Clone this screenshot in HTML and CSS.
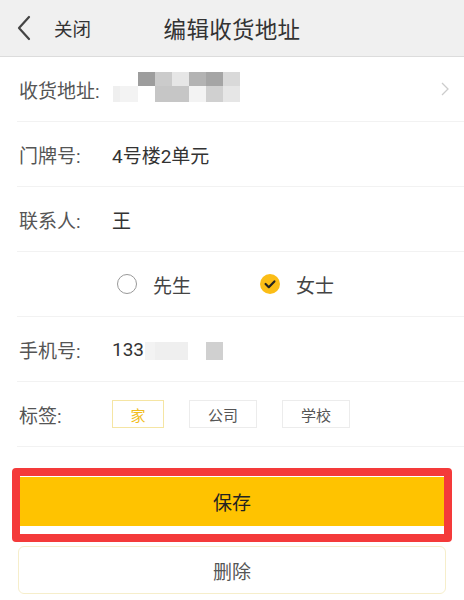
FILE: index.html
```html
<!DOCTYPE html>
<html lang="zh-CN">
<head>
    <meta charset="UTF-8">
    <meta name="viewport" content="width=device-width, initial-scale=1.0">
    <title>编辑收货地址</title>
    <link rel="stylesheet" href="styles.css">
</head>
<body>
    <div class="topbar">
        <div class="topbar-left">
            <svg class="back" width="16" height="26" viewBox="0 0 16 26">
                <polyline points="13,2 3,13 13,24" fill="none" stroke="#444" stroke-width="2.2" stroke-linecap="round" stroke-linejoin="round"/>
            </svg>
            <span class="close">关闭</span>
        </div>
        <div class="title">编辑收货地址</div>
        <div></div>
    </div>

    <div class="form">
        <div class="row">
            <span class="label">收货地址:</span>
            <!-- address hidden behind a mosaic -->
            <div class="mosaic addr">
                <span></span><span></span><span class="s2"></span><span class="s5"></span><span class="s7"></span><span class="s4"></span><span class="s3"></span><span class="s6"></span>
                <span class="s8"></span><span class="s9"></span><span></span><span class="s5b"></span><span class="s5b"></span><span class="s9"></span><span class="s5c"></span><span class="s7"></span>
            </div>
            <svg class="more" width="10" height="14" viewBox="0 0 10 14">
                <polyline points="2,1 8,7 2,13" fill="none" stroke="#ccc" stroke-width="1.3"/>
            </svg>
        </div>

        <div class="row">
            <span class="label">门牌号:</span>
            <span class="value">4号楼2单元</span>
        </div>

        <div class="row">
            <span class="label">联系人:</span>
            <span class="value">王</span>
        </div>

        <div class="row gender">
            <label class="option">
                <span class="radio"></span>
                <span>先生</span>
            </label>
            <label class="option">
                <span class="radio checked">
                    <svg width="20" height="20" viewBox="0 0 20 20">
                        <polyline points="5.6,10 8.8,13.2 14.4,7.4" fill="none" stroke="#222" stroke-width="2.2" stroke-linecap="round" stroke-linejoin="round"/>
                    </svg>
                </span>
                <span>女士</span>
            </label>
        </div>

        <div class="row">
            <span class="label">手机号:</span>
            <span class="value">133</span>
            <div class="mosaic phone">
                <span class="s9"></span><span class="s8"></span><span class="s8"></span><span></span><span class="s5c"></span>
            </div>
        </div>

        <div class="row">
            <span class="label">标签:</span>
            <div class="tags">
                <span class="tag active">家</span>
                <span class="tag">公司</span>
                <span class="tag">学校</span>
            </div>
        </div>
    </div>

    <div class="actions">
        <div class="highlight">
            <button class="btn-save">保存</button>
        </div>
        <button class="btn-delete">删除</button>
    </div>
</body>
</html>
```

FILE: styles.css
```css
body {
    margin: 0;
    font-family: Roboto, "Noto Sans CJK SC", sans-serif;
    background: #fff;
    color: #333;
}

/* Top bar */
.topbar {
    display: grid;
    grid-template-columns: 1fr auto 1fr;
    align-items: center;
    height: 56px;
    background: #f0f0f0;
    border-bottom: 1px solid #dcdcdc;
}
.topbar-left {
    display: flex;
    align-items: center;
    padding-left: 16px;
}
.back {
    display: block;
}
.close {
    margin-left: 22px;
    font-size: 18.5px;
    color: #333;
}
.title {
    font-size: 22.5px;
    color: #333;
    letter-spacing: 0.3px;
}

/* Form rows */
.row {
    display: flex;
    align-items: center;
    height: 64px;
    margin-left: 17px;
    padding-left: 2px;
    border-bottom: 1px solid #f2f2f2;
    font-size: 19px;
}
.label {
    width: 93px;
    flex-shrink: 0;
    color: #555;
}
.value {
    color: #333;
}
.more {
    margin-left: auto;
    margin-right: 14px;
}

/* Mosaic blocks */
.mosaic {
    display: grid;
}
.mosaic span {
    background: transparent;
}
.addr {
    margin-left: 1px;
    grid-template-columns: 7px 18px repeat(6, 17px);
    grid-template-rows: 14px 16px;
    margin-bottom: 4px;
}
.addr span:nth-child(9) { background: #f0f0f0; }
.addr span:nth-child(10) { background: #f6f6f6; }
.phone {
    margin-left: 1px;
    grid-template-columns: 10px 17px 16px 18px 17px;
    grid-template-rows: 18px;
    margin-top: 4px;
}
.s2 { background: #9d9d9d !important; }
.s3 { background: #a5a5a5 !important; }
.s4 { background: #b3b3b3 !important; }
.s5 { background: #cbcbcb !important; }
.s5b { background: #c6c6c6 !important; }
.s5c { background: #d0d0d0 !important; }
.s6 { background: #d9d9d9 !important; }
.s7 { background: #e6e6e6 !important; }
.s8 { background: #efefef !important; }
.s9 { background: #f3f3f3 !important; }

/* Gender choice */
.gender {
    padding-left: 100px;
    gap: 69px;
}
.option {
    display: flex;
    align-items: center;
    gap: 16px;
    color: #444;
}
.radio {
    width: 20px;
    height: 20px;
    box-sizing: border-box;
    border: 1.5px solid #999;
    border-radius: 50%;
}
.radio.checked {
    border: none;
    background: #fbbd16;
}
.radio svg {
    display: block;
}

/* Tags */
.tags {
    display: flex;
    gap: 25px;
}
.tag {
    display: flex;
    align-items: center;
    justify-content: center;
    width: 68px;
    height: 28px;
    box-sizing: border-box;
    border: 1px solid #ececec;
    font-size: 15px;
    color: #555;
}
.tag.active {
    width: 52px;
    border-color: #f5e5a3;
    color: #f1bd1c;
}

/* Bottom buttons */
.actions {
    display: flex;
    flex-direction: column;
    padding-top: 21px;
}
.highlight {
    margin: 0 12px;
    border: 8px solid #f43a3a;
    border-radius: 4px;
    padding: 1px 0 8px;
}
.btn-save {
    display: block;
    width: 100%;
    height: 49px;
    border: none;
    background: #ffc300;
    font-family: inherit;
    font-size: 19px;
    color: #222;
}
.btn-delete {
    margin: 4px 18px 0;
    height: 48px;
    border: 1px solid #f6eecb;
    border-radius: 6px;
    background: #fff;
    font-family: inherit;
    font-size: 19px;
    color: #555;
}
```
